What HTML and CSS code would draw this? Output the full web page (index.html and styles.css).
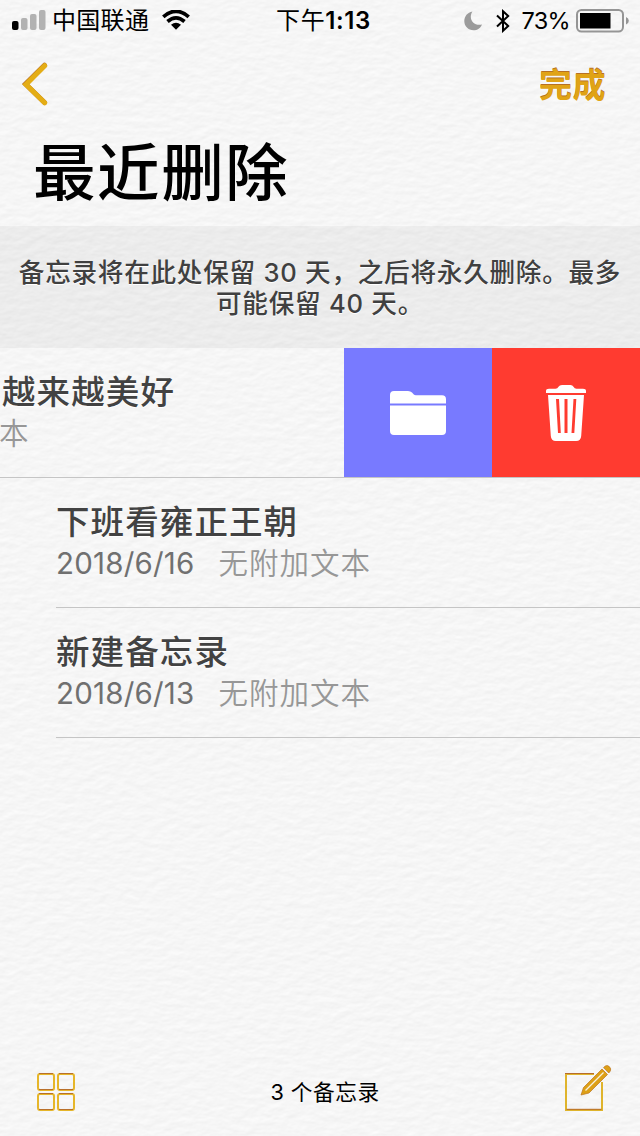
FILE: index.html
```html
<!DOCTYPE html>
<html lang="zh-CN">
<head>
<meta charset="utf-8">
<title>最近删除</title>
<link rel="stylesheet" href="styles.css">
</head>
<body>
<svg class="paper" width="640" height="1136" aria-hidden="true">
  <filter id="grain" x="0" y="0" width="100%" height="100%" color-interpolation-filters="sRGB">
    <feTurbulence type="fractalNoise" baseFrequency="0.08 0.15" numOctaves="3" seed="8" result="noise"/>
    <feDiffuseLighting in="noise" surfaceScale="0.12" diffuseConstant="1.14" lighting-color="#f9f9f9">
      <feDistantLight azimuth="250" elevation="60"/>
    </feDiffuseLighting>
  </filter>
  <rect width="640" height="1136" filter="url(#grain)"/>
</svg>
<div class="screen">
  <header class="status">
    <div class="status-left">
      <svg class="signal" width="34" height="22" viewBox="0 0 34 22"><rect x="0" y="12" width="6.500" height="9" rx="2"/><g fill="#b2b2b2"><rect x="9" y="9" width="6.500" height="12" rx="2"/><rect x="18" y="5" width="6.500" height="16" rx="2"/><rect x="27" y="1" width="6.500" height="20" rx="2"/></g></svg>
      <span class="carrier">中国联通</span>
      <svg class="wifi" width="28" height="20" viewBox="0 0 28 20"><g fill="none" stroke="#000" stroke-width="3.700"><path d="M1.300 6.800Q14-4.200 26.700 6.800"/><path d="M5.500 11.500Q14 4.100 22.500 11.500"/></g><path d="M9 14.700Q14 10.700 19 14.700L14 19.700Z"/></svg>
    </div>
    <div class="clock">下午<b>1:13</b></div>
    <div class="status-right">
      <svg width="19" height="20" viewBox="0 0 19 20"><path fill="#9b9b9b" d="M8.500.5C3.500 1.500.3 5.300.3 10c0 5.200 4 9.200 9.200 9.200 4 0 7-2.200 8.500-5.800-5.700 1.900-11.400-2.200-11.200-8 .1-2 .7-3.600 1.700-4.900Z"/></svg>
      <svg class="bluetooth" width="14" height="24" viewBox="0 0 14 24"><path fill="none" stroke="#000" stroke-width="2" d="M1 6.500 12.200 17 7 21.800V2.200L12.200 7 1 17.500"/></svg>
      <span class="percent">73%</span>
      <svg width="53" height="24" viewBox="0 0 53 24"><rect x="1" y="1" width="46" height="21.500" rx="4.500" fill="none" stroke="#959595" stroke-width="2"/><rect x="4" y="4" width="30.500" height="15.500"/><path fill="#959595" d="M50 8q2.800 1.200 2.800 3.800T50 15.600Z"/></svg>
    </div>
  </header>
  <nav class="nav">
    <svg width="28" height="44" viewBox="0 0 28 44"><g fill="none" stroke-width="5" stroke-linecap="round" stroke-linejoin="miter"><path stroke="#b77024" d="M23.500 3.200 4.500 22l19 18.500"/><path stroke="#e4ad15" d="M23.700 3.700 5 22.500l18.700 18.200"/></g></svg>
    <span class="done">完成</span>
  </nav>
  <h1 class="heading">最近删除</h1>
  <p class="notice"><span>备忘录将在此处保留 30 天，之后将永久删除。最多</span><span>可能保留 40 天。</span></p>
  <main>
    <section class="row swiped">
      <div class="swiped-text">
        <h2 class="title">越来越美好</h2>
        <p class="detail"><span class="extra">本</span></p>
      </div>
      <div class="action move">
        <svg width="58" height="46" viewBox="0 0 58 46"><path fill="#fff" d="M1 13.500V5q0-4 4-4h14q2.500 0 4 1.600L24.800 4.500q.8.700 2 .7H53q4 0 4 4v4.300ZM1 15.500h56V41q0 4-4 4H5q-4 0-4-4Z"/></svg>
      </div>
      <div class="action delete">
        <svg width="42" height="58" viewBox="0 0 42 58"><path fill="#fff" fill-rule="evenodd" d="M1 9V7q0-2.200 3-2.200h6.500q2 0 3-2Q14.500 1 17 1h8.500q2 0 3 1.800t3 2H38q3 0 3 2.200v2ZM3 11h36l-2.800 41q-.4 5-5 5H10.800q-4.600 0-5-5ZM11 15l2 34h2.800L14 15ZM19.500 15v34h3V15ZM28.500 15l-2 34h2.800l2-34Z"/></svg>
      </div>
    </section>
    <section class="row note">
      <h2 class="title">下班看雍正王朝</h2>
      <p class="detail"><span class="date">2018/6/16</span><span class="extra">无附加文本</span></p>
    </section>
    <section class="row note">
      <h2 class="title">新建备忘录</h2>
      <p class="detail"><span class="date">2018/6/13</span><span class="extra">无附加文本</span></p>
    </section>
  </main>
  <footer class="toolbar">
    <svg width="40" height="40" viewBox="0 0 40 40"><g fill="none" stroke-width="2"><g stroke="#e6b62a"><rect x="2" y="2" width="16" height="16" rx="2"/><rect x="22" y="2" width="16" height="16" rx="2"/><rect x="2" y="22" width="16" height="16" rx="2"/><rect x="22" y="22" width="16" height="16" rx="2"/></g><path stroke="#b9702a" stroke-width="1" d="M3 1.500h14M23 1.500h14M3 21.500h14M23 21.500h14M3 37.500h14M23 37.500h14M3 17.500h14M23 17.500h14"/></g></svg>
    <span class="count">3 个备忘录</span>
    <svg class="compose" width="48" height="48" viewBox="0 0 48 48"><path fill="none" stroke="#dfb42c" stroke-width="2" d="M30 10H2v36h36V18"/><path fill="none" stroke="#b76c2a" stroke-width="1" d="M1 9.500h29M2.500 45.300h35"/><path fill="#dda016" stroke="#bc741e" stroke-width=".7" d="M17 31l2.500-7.500L38 5l5.500 5.500L25 29Z"/><path stroke="#f7f1df" stroke-width="1.300" d="M21.500 26.500 39.500 8.500"/><path fill="#dda016" stroke="#bc741e" stroke-width=".7" d="M39.500 3.600l1.800-1.600q2.200-1.300 4.200.8t.8 4.200l-1.500 2Z"/></svg>
  </footer>
</div>
</body>
</html>
```
FILE: styles.css
```css
* { box-sizing: border-box; }
body { margin: 0; background: #f7f7f7; font-family: Inter, "Noto Sans CJK SC", sans-serif; color: #000; }
h1, h2, p { margin: 0; }
svg { display: block; flex: none; }
.paper { position: absolute; inset: 0; z-index: -1; }
.screen { width: 640px; height: 1136px; display: flex; flex-direction: column; overflow: hidden; white-space: nowrap; }

.status { height: 40px; flex: none; display: grid; grid-template-columns: 1fr auto 1fr; align-items: center; padding: 0 11px 0 12px; font-size: 24px; line-height: 40px; }
.status-left, .status-right { display: flex; align-items: center; }
.status-right { justify-content: flex-end; }
.signal, .wifi { margin-top: -2px; }
.carrier { margin-left: 6px; padding-top: 1px; letter-spacing: .3px; }
.wifi { margin-left: 13px; }
.clock { font-weight: 400; letter-spacing: .6px; padding: 1px 0 0 6px; }
.clock b { font-weight: 600; }
.bluetooth { margin: 0 12px 0 13px; }
.percent { font-size: 23.500px; letter-spacing: -.7px; margin-right: 6px; padding-top: 1px; }

.nav { height: 88px; flex: none; display: flex; align-items: center; justify-content: space-between; padding: 0 34px 0 21px; }
.done { font-size: 33px; font-weight: 700; letter-spacing: .5px; margin-top: -3px; color: #e0a316; text-shadow: 0 -1px 0 #b77024; }
.heading { height: 98px; flex: none; padding-left: 33px; font-size: 62.500px; line-height: 90px; font-weight: 500; letter-spacing: 1.600px; }

.notice { height: 122px; flex: none; padding-top: 31px; background: rgba(0, 0, 0, .04); display: flex; flex-direction: column; align-items: center; font-size: 25.600px; line-height: 31px; letter-spacing: .75px; font-weight: 500; color: #404040; text-shadow: 0 1px 0 #fff; }

.row { height: 130px; border-bottom: 1px solid #c5c5c5; }
.title { font-size: 33.500px; line-height: 44px; font-weight: 500; letter-spacing: 1.100px; color: #424242; text-shadow: 0 1px 0 #fff; }
.detail { display: flex; font-size: 29.500px; line-height: 39px; }
.date { color: #707070; letter-spacing: .2px; }
.extra { color: #979797; letter-spacing: 1px; font-weight: 350; }
.note { margin-left: 56px; padding-top: 22px; }
.note .extra { margin-left: 24px; }
.swiped { display: flex; }
.swiped-text { flex: 1; padding: 22px 0 0 2px; }
.swiped-text .detail { margin-left: -3px; }
.action { width: 148px; height: 129px; display: flex; align-items: center; justify-content: center; }
.move { background: #787aff; }
.delete { background: #ff3b30; }

.toolbar { height: 88px; margin-top: auto; display: flex; align-items: center; justify-content: space-between; padding: 0 28px 0 36px; }
.count { font-size: 21.700px; letter-spacing: .5px; padding-left: 10px; margin-top: -4px; }
.compose { margin-top: -9px; }
```
